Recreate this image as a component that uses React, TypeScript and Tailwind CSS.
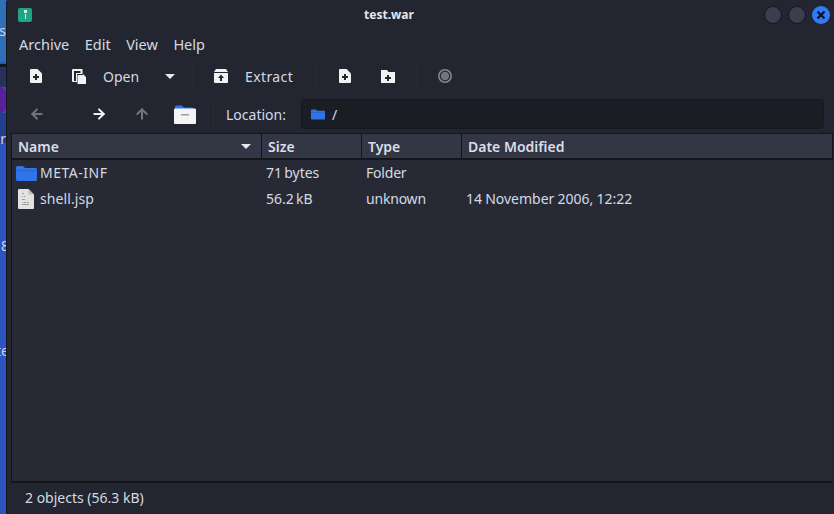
import { ArrowLeft, ArrowRight, ArrowUp } from "lucide-react";

const font = "font-['Noto_Sans',sans-serif]";

function NewDoc({ className = "" }: { className?: string }) {
  return (
    <svg viewBox="0 0 12 14" className={`w-3 h-[14px] ${className}`}>
      <path d="M1 0h6.500L12 4.500V13a1 1 0 0 1-1 1H1a1 1 0 0 1-1-1V1a1 1 0 0 1 1-1z" fill="#f2f2f2" />
      <path d="M5 5h2v2h2v2H7v2H5V9H3V7h2z" fill="#23252f" />
    </svg>
  );
}

function OpenIcon() {
  return (
    <svg viewBox="0 0 14 15" className="w-[14px] h-[15px]">
      <path d="M1 0h9.500v5H5v8H1a1 1 0 0 1-1-1V1a1 1 0 0 1 1-1z" fill="#f2f2f2" />
      <rect x="2" y="2" width="6.500" height="2" fill="#23252f" />
      <path d="M2 4h2v8H2z" fill="#23252f" />
      <path d="M5.500 6H11V5l3 3v7H5.500z" fill="#f2f2f2" />
    </svg>
  );
}

function ExtractIcon() {
  return (
    <svg viewBox="0 0 14 14" className="w-[14px] h-[14px]">
      <path d="M2 0h10l2 3H0z" fill="#f2f2f2" />
      <path d="M0 4h14v9a1 1 0 0 1-1 1H1a1 1 0 0 1-1-1z" fill="#f2f2f2" />
      <path d="M7 5.500 10 9H8v3H6V9H4z" fill="#23252f" />
    </svg>
  );
}

function AddFolder() {
  return (
    <svg viewBox="0 0 14 14" className="w-[14px] h-[14px]">
      <path d="M0 1h6l1.500 2H14v11H0z" fill="#f2f2f2" />
      <path d="M6 6h2v2h2v2H8v2H6v-2H4V8h2z" fill="#23252f" />
    </svg>
  );
}

function RecordIcon() {
  return (
    <svg viewBox="0 0 14 14" className="w-[14px] h-[14px]">
      <circle cx="7" cy="7" r="6.200" fill="none" stroke="#85878d" strokeWidth="1.600" />
      <circle cx="7" cy="7" r="4.200" fill="#74767c" />
    </svg>
  );
}

function FolderIcon({ className = "" }: { className?: string }) {
  return (
    <svg viewBox="0 0 21 15" className={className}>
      <path d="M0 1.500A1.500 1.500 0 0 1 1.500 0H7l2 2h10.500A1.500 1.500 0 0 1 21 3.500v10a1.500 1.500 0 0 1-1.500 1.500h-18A1.500 1.500 0 0 1 0 13.500z" fill="#2f74e8" />
      <path d="M0 4h21v1.200H0z" fill="#2a66cf" />
    </svg>
  );
}

function FileManagerIcon() {
  return (
    <svg viewBox="0 0 22 19" className="w-[22px] h-[19px]">
      <path d="M1 2a1.500 1.500 0 0 1 1.500-1.500H8l2 2h9V6H1z" fill="#2f74e8" />
      <rect x="0" y="3.500" width="22" height="15.500" rx="1" fill="#f4f4f4" />
      <rect x="7" y="9" width="8" height="1.500" fill="#9a9ca3" />
    </svg>
  );
}

function JspFile() {
  return (
    <svg viewBox="0 0 16 20" className="w-4 h-5">
      <path d="M1 0h9.500L16 5.500V19a1 1 0 0 1-1 1H1a1 1 0 0 1-1-1V1a1 1 0 0 1 1-1z" fill="#e2e2e2" />
      <path d="M10.500 0 16 5.500h-4.500a1 1 0 0 1-1-1z" fill="#bdbdbd" />
      <path d="M4 4h2v1H4zM4 7h1v1H4zM6 7h1v1H6zM4 10h3v1H4zM4 13h1v1H4zM6 13h2v1H6zM9 13h2v1H9zM4 15h7v1H4z" fill="#9c9c9c" />
    </svg>
  );
}

function Sep() {
  return <div className="w-px h-[29px] bg-[#282b36]" />;
}

const columns = [
  { label: "Name", width: "w-[250px]", sort: true },
  { label: "Size", width: "w-[100px]" },
  { label: "Type", width: "w-[100px]" },
  { label: "Date Modified", width: "flex-1" },
];

const rows = [
  { name: "META-INF", size: "71 bytes", type: "Folder", date: "", folder: true },
  { name: "shell.jsp", size: "56.2 kB", type: "unknown", date: "14 November 2006, 12:22", folder: false },
];

export default function App() {
  return (
    <div className={`relative flex w-[834px] h-[514px] overflow-hidden bg-[#2b50b8] ${font} text-[14px] text-[#d3dae3]`}>
      {/* desktop behind the window */}
      <div className="relative w-[6px] shrink-0 overflow-hidden bg-[#2d55c0] text-[#c9d6ee]">
        <div className="absolute left-0 top-0 w-[6px] h-[62px] bg-[#2f6fb5]" />
        <div className="absolute left-0 top-[64px] w-[6px] h-[3px] bg-[#14161d]" />
        <div className="absolute left-0 top-[67px] w-[6px] h-[20px] bg-[#26315f]" />
        <div className="absolute left-0 top-[87px] w-[6px] h-[26px] bg-[#5a1f9c] rounded-r-full" />
        <div className="absolute left-0 top-[113px] w-[6px] h-[30px] bg-[#23408f]" />
        <span className="absolute right-0 top-[20px]">s</span>
        <span className="absolute right-0 top-[128px]">r</span>
        <span className="absolute left-[1px] top-[235px]">8</span>
        <span className="absolute left-[-4px] top-[340px]">te</span>
      </div>
      <div className="flex-1 flex flex-col bg-[#232631] border-l border-[#15171d] rounded-tl-[3px]">
        {/* title bar */}
        <div className="h-[30px] flex items-center shrink-0 relative pl-[11px] pr-[4px]">
          <div className="w-[14px] h-[14px] rounded-[2px] bg-[#1fa585] flex flex-col items-center">
            <div className="w-[3px] h-[3px] mt-[2px] bg-[#cfeee6]" />
            <div className="w-[1px] h-[5px] mt-[1px] bg-[#cfeee6]" />
          </div>
          <div className="flex-1 text-center text-[12px] font-bold text-[#e2e5ea] pr-[18px]">test.war</div>
          <div className="flex items-center gap-[6px]">
            <div className="w-[18px] h-[18px] rounded-full bg-[#3a3e4e] border border-[#14161d]" />
            <div className="w-[18px] h-[18px] rounded-full bg-[#3a3e4e] border border-[#14161d]" />
            <div className="w-[18px] h-[18px] rounded-full bg-[#2f7cf6] flex items-center justify-center">
              <svg viewBox="0 0 10 10" className="w-[10px] h-[10px]">
                <path d="M1.500 1.500 8.500 8.500M8.500 1.500 1.500 8.500" stroke="#10131a" strokeWidth="2.200" />
              </svg>
            </div>
          </div>
        </div>

        {/* menu bar */}
        <div className="h-[30px] flex items-center gap-[15.500px] pl-[12px] pt-[1px] shrink-0 border-b border-[#272a35] text-[14.5px]">
          {["Archive", "Edit", "View", "Help"].map((m) => (
            <span key={m}>{m}</span>
          ))}
        </div>

        {/* toolbar */}
        <div className="h-[32px] flex items-center shrink-0 pl-[23px]">
          <NewDoc />
          <div className="w-[30px]" />
          <OpenIcon />
          <span className="ml-[17px] w-[35px]">Open</span>
          <div className="ml-[27px] w-0 h-0 border-x-[5px] border-x-transparent border-t-[5px] border-t-[#e8e8e8]" />
          <div className="ml-[17px]"><Sep /></div>
          <div className="ml-[21px]"><ExtractIcon /></div>
          <span className="ml-[17px] w-[48px] tracking-[0.4px]">Extract</span>
          <div className="ml-[23px]"><Sep /></div>
          <div className="ml-[22px]"><NewDoc /></div>
          <div className="ml-[30px]"><AddFolder /></div>
          <div className="ml-[21px]"><Sep /></div>
          <div className="ml-[21px]"><RecordIcon /></div>
        </div>

        {/* location bar */}
        <div className="h-[41px] flex items-center shrink-0 pt-[3px] pl-[22px] pr-[10px]">
          <ArrowLeft size={16} strokeWidth={3} className="text-[#72757d]" />
          <ArrowRight size={16} strokeWidth={3} className="ml-[46px] text-[#f2f2f2]" />
          <ArrowUp size={16} strokeWidth={3} className="ml-[27px] text-[#72757d]" />
          <div className="ml-[24px]"><FileManagerIcon /></div>
          <div className="ml-[17px]"><Sep /></div>
          <span className="ml-[12px] w-[59px]">Location:</span>
          <div className="ml-[16px] flex-1 h-[30px] rounded-[4px] bg-[#1b1d24] border border-[#171920] flex items-center pl-[9px]">
            <FolderIcon className="w-[14px] h-[11px]" />
            <span className="ml-[7px]">/</span>
          </div>
        </div>

        {/* file list */}
        <div className="flex-1 flex flex-col ml-[4px] mr-[1px] border-l border-t border-[#14161c] min-h-0">
          <div className="h-[26px] flex shrink-0 bg-[#333644] border-b-[2px] border-[#14161c] font-semibold text-[#d8dee8]">
            {columns.map((c) => (
              <div key={c.label} className={`${c.width} flex items-center pl-[6px] pr-[12px] border-r border-[#14161c]`}>
                <span className="flex-1">{c.label}</span>
                {c.sort && (
                  <div className="w-0 h-0 border-x-[5px] border-x-transparent border-t-[5px] border-t-[#e8e8e8] mr-[-2px]" />
                )}
              </div>
            ))}
          </div>
          <div className="flex-1 bg-[#272a35] border-b-[2px] border-[#14161c]">
            {rows.map((r) => (
              <div key={r.name} className="h-[26px] flex items-center">
                <div className="w-[250px] flex items-center">
                  <div className="w-[28px] flex justify-center">
                    {r.folder ? <FolderIcon className="w-[21px] h-[15px]" /> : <JspFile />}
                  </div>
                  <span className={r.folder ? "mb-[2px] tracking-[0.5px]" : "mb-[2px] tracking-[0.1px]"}>{r.name}</span>
                </div>
                <span className="w-[100px] pl-[4px] mb-[2px] [word-spacing:-1.5px]">{r.size}</span>
                <span className="w-[100px] pl-[4px] mb-[2px] tracking-[-0.2px]">{r.type}</span>
                <span className="pl-[4px] mb-[2px] [word-spacing:-0.5px]">{r.date}</span>
              </div>
            ))}
          </div>
        </div>

        {/* status bar */}
        <div className="h-[31px] shrink-0 flex items-center pl-[18px] pb-[3px] text-[#d3dae3]">2 objects (56.3 kB)</div>
      </div>
    </div>
  );
}
